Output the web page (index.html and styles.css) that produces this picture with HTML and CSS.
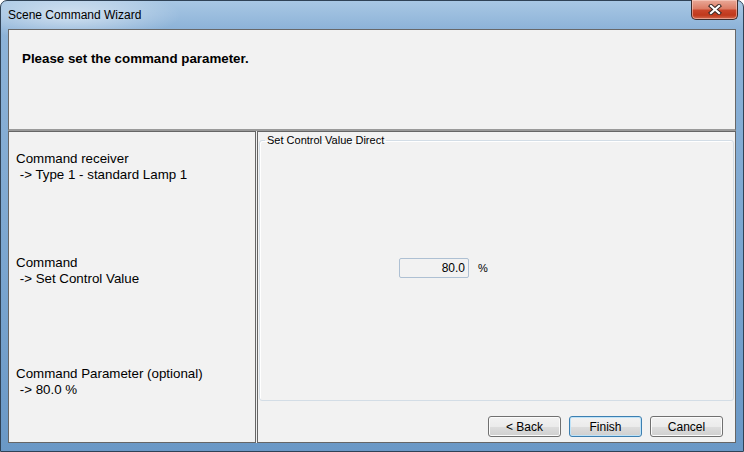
FILE: index.html
```html
<!DOCTYPE html>
<html>
<head>
	<title>Scene Command Wizard</title>
	<link rel="stylesheet" href="styles.css">
</head>
<body>
	<div class="window">
		<div class="titlebar">
			<span class="title">Scene Command Wizard</span>
			<button class="close" title="Close">
				<svg width="14" height="11" viewBox="0 0 14 11">
					<path d="M3 2 L11 9 M11 2 L3 9" stroke="#3b2a26" stroke-width="4.2" stroke-linecap="square"/>
					<path d="M3 2 L11 9 M11 2 L3 9" stroke="#ffffff" stroke-width="2.2" stroke-linecap="square"/>
				</svg>
			</button>
		</div>

		<div class="client">
			<div class="header">
				<p class="prompt">Please set the command parameter.</p>
			</div>

			<div class="body">
				<div class="summary">
					<div class="step">
						<div>Command receiver</div>
						<div>&nbsp;-&gt; Type 1 - standard Lamp 1</div>
					</div>
					<div class="step step-command">
						<div>Command</div>
						<div>&nbsp;-&gt; Set Control Value</div>
					</div>
					<div class="step step-param">
						<div>Command Parameter (optional)</div>
						<div>&nbsp;-&gt; 80.0 %</div>
					</div>
				</div>

				<div class="page">
					<fieldset class="group">
						<legend>Set Control Value Direct</legend>
						<div class="value-row">
							<input class="value-input" type="text" value="80.0">
							<span class="unit">%</span>
						</div>
					</fieldset>
					<div class="buttons">
						<button class="btn">&lt; Back</button>
						<button class="btn btn-default">Finish</button>
						<button class="btn">Cancel</button>
					</div>
				</div>
			</div>
		</div>
	</div>
</body>
</html>
```

FILE: styles.css
```css
body {
	margin: 0;
	font-family: "Liberation Sans", Arial, sans-serif;
	background-color: #ffffff;
}

.window {
	width: 744px;
	height: 452px;
	box-sizing: border-box;
	border: 1px solid #2f4256;
	border-radius: 7px 7px 0 0;
	padding: 0 7px 8px 7px;
	display: flex;
	flex-direction: column;
	background:
		radial-gradient(ellipse 110px 26px at 70px 14px, rgba(255, 255, 255, 0.55), rgba(255, 255, 255, 0) 100%),
		linear-gradient(to bottom, #a8c7e4 0px, #8db3d8 28px, #7aa5cf 60%, #6a98c6 100%);
}

.titlebar {
	height: 28px;
	flex: none;
	display: flex;
	justify-content: space-between;
	align-items: flex-start;
}

.title {
	font-size: 12px;
	line-height: 16px;
	padding-top: 6px;
	color: #000;
}

.close {
	width: 47px;
	height: 20px;
	margin-top: -1px;
	margin-right: -2px;
	padding: 0;
	box-sizing: border-box;
	border: 1px solid #3d2c2c;
	border-top: none;
	border-radius: 0 0 5px 5px;
	background: linear-gradient(to bottom, #e9a998 0%, #dc7d66 45%, #c9452a 55%, #c0391c 80%, #d2694e 100%);
	box-shadow: inset 0 0 0 1px rgba(255, 220, 210, 0.5);
	display: flex;
	align-items: center;
	justify-content: center;
}

.client {
	flex: 1;
	display: flex;
	flex-direction: column;
	background-color: #f0f0f0;
}

.header {
	height: 102px;
	flex: none;
	box-sizing: border-box;
	border: 1px solid #686868;
	border-bottom: 2px solid #9a9a9a;
	background-color: #f2f2f2;
	padding: 21px 13px 0 13px;
}

.prompt {
	margin: 0;
	font-size: 13.33px;
	line-height: 16px;
	font-weight: bold;
	color: #000;
}

.body {
	flex: 1;
	display: flex;
	gap: 1px;
}

.summary {
	width: 248px;
	box-sizing: border-box;
	border: 1px solid #666666;
	background-color: #f2f2f2;
	padding: 19px 7px 0 7px;
	font-size: 13.33px;
	line-height: 16px;
	color: #000;
}

.step-command {
	margin-top: 72px;
}

.step-param {
	margin-top: 79px;
}

.page {
	flex: 1;
	box-sizing: border-box;
	border: 1px solid #666666;
	background-color: #f2f2f2;
	display: flex;
	flex-direction: column;
}

.group {
	flex: 1;
	min-height: 0;
	margin: 2px 1px 0 1px;
	padding: 0;
	border: 1px solid #d3dde6;
	border-radius: 3px;
	box-shadow: inset 1px 1px 0 #ffffff;
}

.group legend {
	margin-left: 5px;
	padding: 0 2px;
	font-size: 11px;
	line-height: 13px;
	color: #000;
}

.value-row {
	margin: 111px 0 0 139px;
	display: flex;
	align-items: center;
	gap: 9px;
}

.value-input {
	width: 70px;
	height: 20px;
	box-sizing: border-box;
	margin: 0;
	padding: 0 3px;
	border: 1px solid #aec0d3;
	border-radius: 2px;
	background-color: #f2f2f2;
	font-family: "Liberation Sans", Arial, sans-serif;
	font-size: 12px;
	text-align: right;
	color: #000;
}

.unit {
	font-size: 11px;
	color: #000;
}

.buttons {
	height: 41px;
	flex: none;
	box-sizing: border-box;
	padding: 15px 12px 0 0;
	display: flex;
	justify-content: flex-end;
	align-items: flex-start;
	gap: 8px;
}

.btn {
	width: 73px;
	height: 21px;
	box-sizing: border-box;
	padding: 0;
	border: 1px solid #707070;
	border-radius: 3px;
	background: linear-gradient(to bottom, #f2f2f2 0%, #ebebeb 50%, #dddddd 51%, #cfcfcf 100%);
	box-shadow: inset 0 0 0 1px #fbfbfb;
	font-family: "Liberation Sans", Arial, sans-serif;
	font-size: 12px;
	color: #000;
}

.btn-default {
	border-color: #3c7fb1;
	box-shadow: inset 0 0 0 1px #bfe3f8;
}
```
